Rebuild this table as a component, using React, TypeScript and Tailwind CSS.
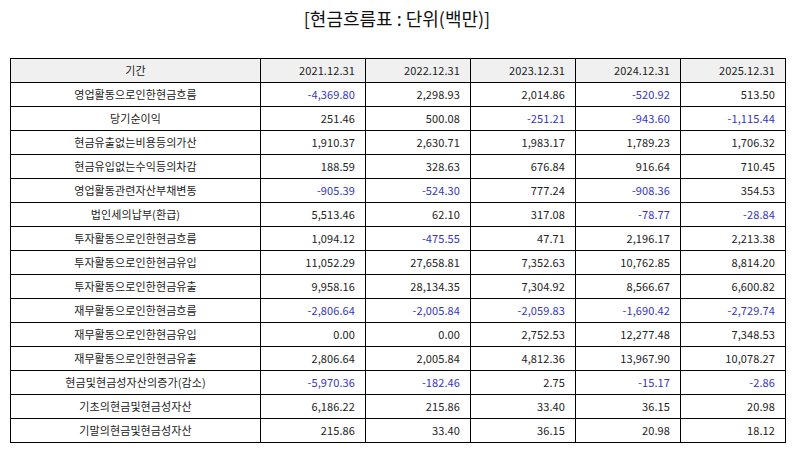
import React from 'react';

type Row = { label: string; values: string[] };

const years = ['2021.12.31', '2022.12.31', '2023.12.31', '2024.12.31', '2025.12.31'];

const rows: Row[] = [
  { label: '영업활동으로인한현금흐름', values: ['-4,369.80', '2,298.93', '2,014.86', '-520.92', '513.50'] },
  { label: '당기순이익', values: ['251.46', '500.08', '-251.21', '-943.60', '-1,115.44'] },
  { label: '현금유출없는비용등의가산', values: ['1,910.37', '2,630.71', '1,983.17', '1,789.23', '1,706.32'] },
  { label: '현금유입없는수익등의차감', values: ['188.59', '328.63', '676.84', '916.64', '710.45'] },
  { label: '영업활동관련자산부채변동', values: ['-905.39', '-524.30', '777.24', '-908.36', '354.53'] },
  { label: '법인세의납부(환급)', values: ['5,513.46', '62.10', '317.08', '-78.77', '-28.84'] },
  { label: '투자활동으로인한현금흐름', values: ['1,094.12', '-475.55', '47.71', '2,196.17', '2,213.38'] },
  { label: '투자활동으로인한현금유입', values: ['11,052.29', '27,658.81', '7,352.63', '10,762.85', '8,814.20'] },
  { label: '투자활동으로인한현금유출', values: ['9,958.16', '28,134.35', '7,304.92', '8,566.67', '6,600.82'] },
  { label: '재무활동으로인한현금흐름', values: ['-2,806.64', '-2,005.84', '-2,059.83', '-1,690.42', '-2,729.74'] },
  { label: '재무활동으로인한현금유입', values: ['0.00', '0.00', '2,752.53', '12,277.48', '7,348.53'] },
  { label: '재무활동으로인한현금유출', values: ['2,806.64', '2,005.84', '4,812.36', '13,967.90', '10,078.27'] },
  { label: '현금및현금성자산의증가(감소)', values: ['-5,970.36', '-182.46', '2.75', '-15.17', '-2.86'] },
  { label: '기초의현금및현금성자산', values: ['6,186.22', '215.86', '33.40', '36.15', '20.98'] },
  { label: '기말의현금및현금성자산', values: ['215.86', '33.40', '36.15', '20.98', '18.12'] },
];

export default function App() {
  return (
    <div
      className="w-[794px] h-[452px] bg-white text-[#222]"
      style={{ fontFamily: '"Noto Sans CJK KR", "Noto Sans", sans-serif' }}
    >
      <h1 className="pt-[5px] h-[58px] text-center text-[18px] leading-[26px] font-normal text-[#111]">
        [현금흐름표 : 단위(백만)]
      </h1>
      <table className="ml-[10px] w-[775px] border-collapse table-fixed text-[11px] tracking-[0.1px]">
        <colgroup>
          <col className="w-[250px]" />
          {years.map((y) => (
            <col key={y} className="w-[105px]" />
          ))}
        </colgroup>
        <thead>
          <tr className="h-[24px] bg-[#f0f0f0]">
            <th className="border-[1.5px] border-black font-normal text-center p-0">기간</th>
            {years.map((y) => (
              <th key={y} className="border-[1.5px] border-black font-normal text-right pr-[10px]">
                {y}
              </th>
            ))}
          </tr>
        </thead>
        <tbody>
          {rows.map((row) => (
            <tr key={row.label} className="h-[24px]">
              <td className="border-[1.5px] border-black text-center p-0">{row.label}</td>
              {row.values.map((v, i) => (
                <td
                  key={i}
                  className={`border-[1.5px] border-black text-right pr-[10px] ${v.startsWith('-') ? 'text-[#3434c8]' : ''}`}
                >
                  {v}
                </td>
              ))}
            </tr>
          ))}
        </tbody>
      </table>
    </div>
  );
}
